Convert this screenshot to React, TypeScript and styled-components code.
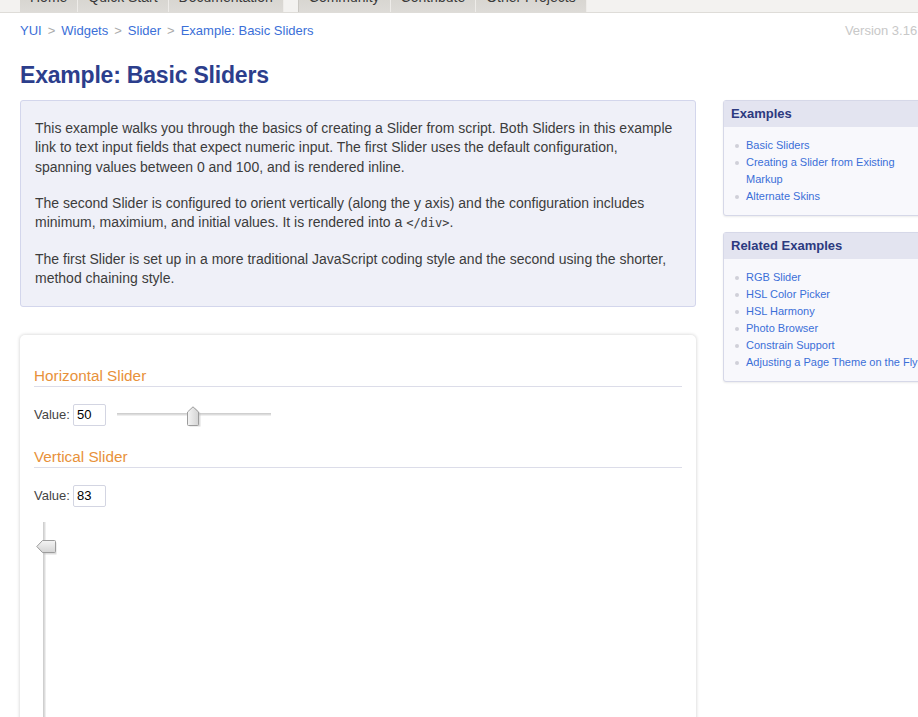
import React from "react";
import styled, { createGlobalStyle } from "styled-components";

const Global = createGlobalStyle`
  html, body { margin: 0; padding: 0; overflow: hidden; background: #fff; }
  body { font-family: "Liberation Sans", Arial, sans-serif; color: #333; }
  * { box-sizing: border-box; }
`;

const Page = styled.div`
  width: 960px;
`;

const NavStrip = styled.div`
  height: 13px;
  background: #f3f2f0;
  border-bottom: 1px solid #dedcd8;
  padding-left: 20px;
  display: flex;
  overflow: hidden;
`;

const Tab = styled.div<{ $gap?: boolean }>`
  height: 12px;
  margin-left: ${(p) => (p.$gap ? "14px" : "0")};
  padding: 0 10px;
  background: linear-gradient(#d8d6d1, #dddbd7);
  border-right: 1px solid #eeece9;
  border-left: ${(p) => (p.$gap ? "1px solid #c9c7c2" : "none")};
  font-size: 14px;
  color: #3a3a3a;
  line-height: 12px;
  display: flex;
  align-items: flex-end;
  span { position: relative; top: -9px; white-space: nowrap; }
`;

const TopRow = styled.div`
  display: flex;
  justify-content: space-between;
  align-items: center;
  padding: 7px 20px 0;
  height: 28px;
  font-size: 13px;
`;

const Crumbs = styled.div`
  display: flex;
  gap: 6px;
`;

const Crumb = styled.a`
  color: #3b6fd8;
  text-decoration: none;
`;

const Sep = styled.span`
  color: #aaa;
`;

const Version = styled.div`
  color: #c8c8c8;
  margin-right: 12px;
`;

const Title = styled.h1`
  margin: 19px 20px 0;
  font-size: 23px;
  letter-spacing: -0.2px;
  font-weight: bold;
  color: #2c3e8c;
  line-height: 30px;
`;

const Columns = styled.div`
  display: flex;
  gap: 27px;
  padding: 0 20px;
  margin-top: 10px;
  align-items: flex-start;
`;

const Main = styled.div`
  width: 676px;
  flex: none;
`;

const Intro = styled.div`
  background: #eff0f8;
  border: 1px solid #d3d6ec;
  border-radius: 3px;
  padding: 10px 21px 17px 14px;
  font-size: 14px;
  line-height: 19.4px;
  color: #3c3c3c;
  p { margin: 8px 0 16.5px; }
  p:last-child { margin-bottom: 0; }
  code { font-family: "DejaVu Sans Mono", monospace; font-size: 12px; }
`;

const Example = styled.div`
  margin-top: 28px;
  background: #fff;
  border-radius: 5px;
  box-shadow: 0 0 3px 1px rgba(0, 0, 0, 0.12);
  padding: 31px 14px 0;
  height: 420px;
`;

const SectionTitle = styled.h3`
  margin: 0;
  font-size: 15.3px;
  font-weight: normal;
  color: #e8913a;
  line-height: 20px;
  border-bottom: 1px solid #dcdde9;
`;

const ValueRow = styled.div`
  display: flex;
  align-items: center;
  margin: 17px 0 21px;
  font-size: 13px;
  color: #444;
  gap: 3px;
`;

const ValueInput = styled.input`
  width: 33px;
  height: 22px;
  border: 1px solid #d3d5e2;
  border-radius: 2px;
  font-family: "Liberation Sans", Arial, sans-serif;
  font-size: 13px;
  color: #000;
  padding: 0 3px;
`;

const HRail = styled.div`
  position: relative;
  margin-left: 8px;
  width: 154px;
  height: 3px;
  background: #dcdcdc;
  border-top: 1px solid #cfcfcf;
  border-bottom: 1px solid #eee;
`;

const HThumb = styled.svg`
  position: absolute;
  left: 69px;
  top: -8px;
`;

const VRail = styled.div`
  position: relative;
  margin: -6px 0 0 9px;
  width: 3px;
  height: 300px;
  background: #dcdcdc;
  border-left: 1px solid #cfcfcf;
  border-right: 1px solid #eee;
`;

const VThumb = styled.svg`
  position: absolute;
  left: -8px;
  top: 17px;
`;

const Sidebar = styled.div`
  width: 212px;
  flex: none;
  display: flex;
  flex-direction: column;
  gap: 16px;
`;

const SideBox = styled.div`
  border: 1px solid #d6d8e8;
  border-radius: 3px;
  background: #f8f8fc;
  box-shadow: 0 1px 2px rgba(0, 0, 0, 0.08);
`;

const SideHead = styled.div`
  background: #e3e4f0;
  color: #2c3a80;
  font-weight: bold;
  font-size: 13px;
  height: 26px;
  line-height: 26px;
  padding-left: 7px;
`;

const SideList = styled.ul`
  list-style: none;
  margin: 0;
  padding: 10px 6px 10px 11px;
  font-size: 11px;
  line-height: 17px;
`;

const SideItem = styled.li`
  position: relative;
  padding-left: 11px;
  color: #3b6fd8;
  &::before {
    content: "";
    position: absolute;
    left: 0;
    top: 7px;
    width: 4px;
    height: 4px;
    border-radius: 50%;
    background: #d0d0d8;
  }
`;

const HThumbIcon = () => (
  <HThumb width="16" height="21" viewBox="0 0 16 21">
    <defs>
      <linearGradient id="hg" x1="0" y1="0" x2="1" y2="0">
        <stop offset="0" stopColor="#f4f4f4" />
        <stop offset="1" stopColor="#d4d4d4" />
      </linearGradient>
    </defs>
    <path d="M2.5 19.5 L2.5 6 L8 0.8 L13.5 6 L13.5 19.5 Z" fill="#bbb" transform="translate(1,1)" opacity="0.5" />
    <path d="M1.5 18.5 L1.5 6 L7 0.8 L12.5 6 L12.5 18.5 Q12.5 19.5 11.5 19.5 L2.5 19.5 Q1.5 19.5 1.5 18.5 Z" fill="url(#hg)" stroke="#9c9c9c" strokeWidth="1" />
  </HThumb>
);

const VThumbIcon = () => (
  <VThumb width="21" height="16" viewBox="0 0 21 16">
    <defs>
      <linearGradient id="vg" x1="0" y1="0" x2="0" y2="1">
        <stop offset="0" stopColor="#f4f4f4" />
        <stop offset="1" stopColor="#d4d4d4" />
      </linearGradient>
    </defs>
    <path d="M7 2.5 L19.5 2.5 L19.5 14.5 L7 14.5 L1.5 8.5 Z" fill="#bbb" transform="translate(1,1)" opacity="0.5" />
    <path d="M6.5 1.5 L18.5 1.5 Q19.5 1.5 19.5 2.5 L19.5 12.5 Q19.5 13.5 18.5 13.5 L6.5 13.5 L0.8 7.5 Z" fill="url(#vg)" stroke="#9c9c9c" strokeWidth="1" />
  </VThumb>
);

const tabs1 = ["Home", "Quick Start", "Documentation"];
const tabs2 = ["Community", "Contribute", "Other Projects"];

export default function App() {
  return (
    <Page>
      <Global />
      <NavStrip>
        {tabs1.map((t) => (
          <Tab key={t}><span>{t}</span></Tab>
        ))}
        {tabs2.map((t, i) => (
          <Tab key={t} $gap={i === 0}><span>{t}</span></Tab>
        ))}
      </NavStrip>
      <TopRow>
        <Crumbs>
          <Crumb>YUI</Crumb>
          <Sep>&gt;</Sep>
          <Crumb>Widgets</Crumb>
          <Sep>&gt;</Sep>
          <Crumb>Slider</Crumb>
          <Sep>&gt;</Sep>
          <Crumb>Example: Basic Sliders</Crumb>
        </Crumbs>
        <Version>Version 3.16.0</Version>
      </TopRow>
      <Title>Example: Basic Sliders</Title>
      <Columns>
        <Main>
          <Intro>
            <p>
              This example walks you through the basics of creating a Slider from script. Both Sliders in this example
              link to text input fields that expect numeric input. The first Slider uses the default configuration,
              spanning values between 0 and 100, and is rendered inline.
            </p>
            <p>
              The second Slider is configured to orient vertically (along the y axis) and the configuration includes
              minimum, maximium, and initial values. It is rendered into a <code>&lt;/div&gt;</code>.
            </p>
            <p>
              The first Slider is set up in a more traditional JavaScript coding style and the second using the shorter,
              method chaining style.
            </p>
          </Intro>
          <Example>
            <SectionTitle>Horizontal Slider</SectionTitle>
            <ValueRow>
              Value: <ValueInput defaultValue="50" />
              <HRail>
                <HThumbIcon />
              </HRail>
            </ValueRow>
            <SectionTitle>Vertical Slider</SectionTitle>
            <ValueRow>
              Value: <ValueInput defaultValue="83" />
            </ValueRow>
            <VRail>
              <VThumbIcon />
            </VRail>
          </Example>
        </Main>
        <Sidebar>
          <SideBox>
            <SideHead>Examples</SideHead>
            <SideList>
              <SideItem>Basic Sliders</SideItem>
              <SideItem>Creating a Slider from Existing Markup</SideItem>
              <SideItem>Alternate Skins</SideItem>
            </SideList>
          </SideBox>
          <SideBox>
            <SideHead>Related Examples</SideHead>
            <SideList>
              <SideItem>RGB Slider</SideItem>
              <SideItem>HSL Color Picker</SideItem>
              <SideItem>HSL Harmony</SideItem>
              <SideItem>Photo Browser</SideItem>
              <SideItem>Constrain Support</SideItem>
              <SideItem>Adjusting a Page Theme on the Fly</SideItem>
            </SideList>
          </SideBox>
        </Sidebar>
      </Columns>
    </Page>
  );
}
